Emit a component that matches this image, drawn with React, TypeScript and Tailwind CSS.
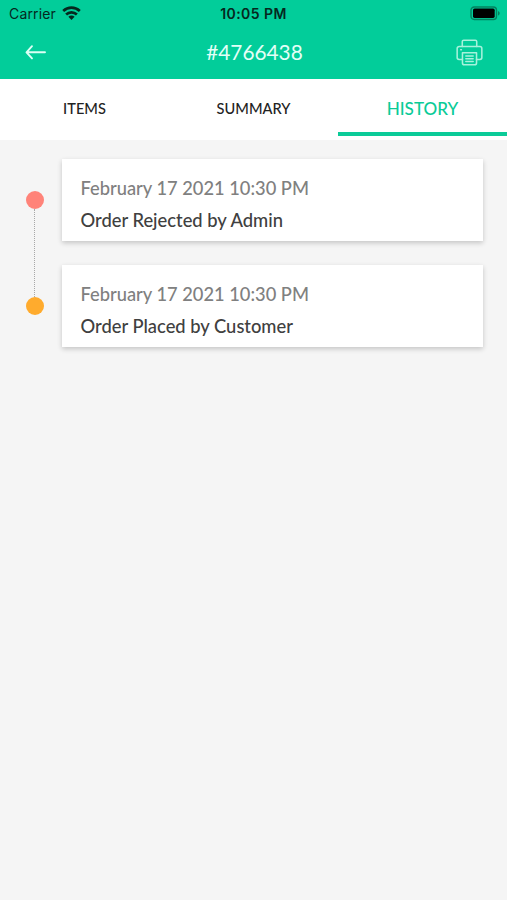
import { useState } from 'react';

interface HistoryEvent {
  id: number;
  date: string;
  title: string;
}

const TABS = ['ITEMS', 'SUMMARY', 'HISTORY'];

const EVENTS: HistoryEvent[] = [
  { id: 2, date: 'February 17 2021 10:30 PM', title: 'Order Rejected by Admin' },
  { id: 1, date: 'February 17 2021 10:30 PM', title: 'Order Placed by Customer' },
];

function WifiIcon() {
  return (
    <svg width="19" height="14" viewBox="0 0 19 14" fill="none" stroke="#05281e" strokeWidth="2.7">
      <path d="M1.200 5C6 .5 13 .5 17.800 5" />
      <path d="M4.100 8.500c3.100-2.900 7.700-2.900 10.800 0" />
      <path d="M9.500 13.900 6.400 10.800c1.800-1.600 4.400-1.600 6.200 0z" fill="#05281e" stroke="none" />
    </svg>
  );
}

function BatteryIcon() {
  return (
    <svg width="31" height="15" viewBox="0 0 31 15" fill="none">
      <rect x="1" y="1" width="25.5" height="12.5" rx="3.2" stroke="#03825f" strokeWidth="1.4" />
      <rect x="3" y="2.600" width="21.700" height="9.300" rx="1.600" fill="#000" />
      <path d="M28 5v4.600c1-.4 1.700-1.300 1.700-2.300S29 5.400 28 5z" fill="#03825f" />
    </svg>
  );
}

function BackIcon() {
  return (
    <svg
      width="22"
      height="16"
      viewBox="0 0 22 16"
      fill="none"
      stroke="#dcfff5"
      strokeWidth="1.9"
      strokeLinecap="round"
      strokeLinejoin="round"
    >
      <path d="M20 8.300H1.800M7 2.200 1.500 8.300 7 14.400" />
    </svg>
  );
}

function PrinterIcon() {
  return (
    <svg
      width="27"
      height="27"
      viewBox="0 0 28 28"
      fill="none"
      stroke="#a6f2dc"
      strokeWidth="1.6"
      strokeLinecap="round"
      strokeLinejoin="round"
    >
      <path d="M6.500 7.800V2.700a1.500 1.500 0 0 1 1.500-1.500h12a1.500 1.500 0 0 1 1.500 1.500v5.100" />
      <path d="M6.700 21.200H3.200a2 2 0 0 1-2-2V9.800a2 2 0 0 1 2-2h21.600a2 2 0 0 1 2 2v9.400a2 2 0 0 1-2 2h-3.500" />
      <path d="M6.700 14.200h14.600v10.600a2 2 0 0 1-2 2H8.700a2 2 0 0 1-2-2z" />
      <path d="M10.200 17.600h7.600M10.200 20.500h7.600M10.200 23.400h7.600M4.900 11.200h.7" />
    </svg>
  );
}

function StatusBar() {
  return (
    <div className="grid h-[27px] grid-cols-3 items-center font-['Inter','Liberation_Sans',sans-serif] text-[#05281e]">
      <div className="flex items-center gap-[6px] pl-[9px]">
        <span className="text-[14px] tracking-[0.15px]">Carrier</span>
        <div className="pb-[1px]">
          <WifiIcon />
        </div>
      </div>
      <span className="text-center text-[14px] font-semibold tracking-[0.45px]">10:05 PM</span>
      <div className="flex justify-end pr-[6px]">
        <BatteryIcon />
      </div>
    </div>
  );
}

function EventCard({ event }: { event: HistoryEvent }) {
  return (
    <div className="h-[82px] bg-white pt-[16px] pl-[18.5px] shadow-[0_2px_5px_rgba(0,0,0,0.2)]">
      <p className="text-[18.3px] leading-[26px] font-medium text-[#808080]">{event.date}</p>
      <p className="mt-[6px] text-[18.35px] leading-[26px] font-medium text-[#404040]">{event.title}</p>
    </div>
  );
}

function App() {
  const [activeTab, setActiveTab] = useState('HISTORY');

  return (
    <div className="min-h-screen bg-[#f5f5f5] font-['Lato','Open_Sans',sans-serif]">
      <header className="h-[79px] bg-[#02cd9a]">
        <StatusBar />
        <div className="flex h-[50px] items-center justify-between pr-[24px] pl-[25px]">
          <button className="w-[28px]">
            <BackIcon />
          </button>
          <h1 className="text-[20.8px] text-[#e3fff7]">#4766438</h1>
          <button className="flex w-[27px] justify-center">
            <PrinterIcon />
          </button>
        </div>
      </header>

      <nav className="grid h-[61px] grid-cols-3 bg-white pb-[4px]">
        {TABS.map((tab) => (
          <button
            key={tab}
            onClick={() => setActiveTab(tab)}
            className={
              tab === activeTab
                ? 'border-b-4 border-[#0bcb98] pt-[7px] text-[17.1px] font-medium text-[#0bcb98]'
                : 'border-b-4 border-transparent pt-[6px] text-[14.6px] font-medium text-[#222222]'
            }
          >
            {tab}
          </button>
        ))}
      </nav>

      <main className="flex gap-[18.5px] pt-[18.5px] pr-[24px] pl-[26px]">
        <div className="flex w-[17.5px] flex-col items-center pt-[32.5px]">
          <span className="size-[17.5px] shrink-0 rounded-full bg-[#ff8379]" />
          <span className="h-[88.5px] border-l border-dotted border-[#a8a8a8]" />
          <span className="size-[17.5px] shrink-0 rounded-full bg-[#ffab2d]" />
        </div>
        <div className="flex flex-1 flex-col gap-[24.5px]">
          {EVENTS.map((event) => (
            <EventCard key={event.id} event={event} />
          ))}
        </div>
      </main>
    </div>
  );
}

export default App;
